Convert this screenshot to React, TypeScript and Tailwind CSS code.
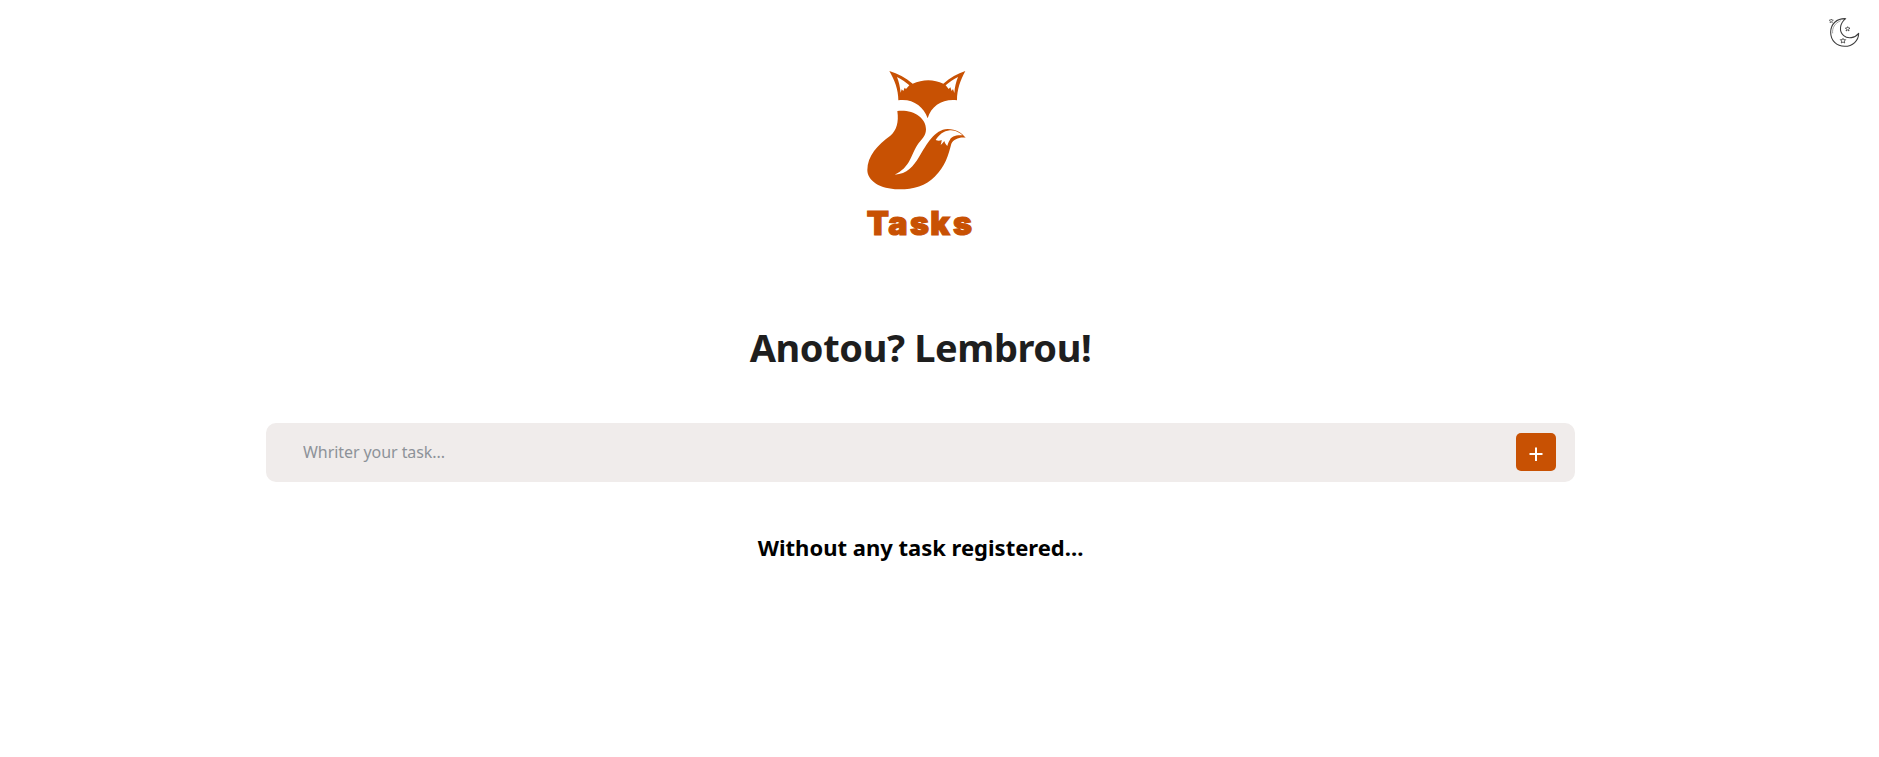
function FoxLogo() {
  return (
    <svg className="h-[185px] w-[141px]" viewBox="0 0 423 555" role="img" aria-label="Tasks">
      <g fill="#c85103">
        <path
          fillRule="evenodd"
          d="M118 33C143 40 167 54 188 71C218 57 252 57 280 71C300 54 323 40 346 33C331 61 321 88 321 121C279 116 244 137 233 175C220 138 187 115 145 121C145 88 134 61 118 33ZM141 51C147 66 150 81 152 98L155 88L160 93L164 83L168 87L178 76C167 66 154 57 141 51ZM324 51C311 57 298 66 287 76L296 87L301 82L305 93L309 87L313 99C314 81 318 66 324 51Z"
        />
        <path d="M142 153C189 148 228 172 228 208C228 229 213 240 202 255C182 286 181 322 134 344C172 342 190 319 207 291C230 254 253 208 293 207C318 207 335 219 347 233C329 230 311 237 304 251C295 286 286 318 254 350C228 378 185 389 145 388C91 387 52 363 52 330C52 288 83 254 121 227C139 212 147 188 142 153Z" />
      </g>
      <path
        fill="#fff"
        d="M257 240C268 224 280 213 300 211C316 210 330 219 338 226C317 224 303 231 300 239C295 247 293 252 292 258C287 252 284 249 283 243C279 248 276 252 272 255C274 249 275 244 275 240C270 242 265 243 257 240Z"
      />
      <text
        x="50 115 180 241 309"
        y="525"
        className="fill-[#c85103] stroke-[#c85103] font-['Inter',sans-serif] text-[97px] font-black"
        strokeWidth="3.5"
      >
        Tasks
      </text>
    </svg>
  );
}

function MoonIcon() {
  return (
    <svg className="h-[50px] w-16" viewBox="0 0 192 150" fill="none" stroke="#3c3c3c" strokeLinejoin="round">
      <path strokeWidth="3.2" d="M92 41C65 40 47 57 47 82C47 107 65 124 89 124C113 124 131 107 131 85C120 99 99 103 86 92C71 79 74 55 92 41Z" />
      <path strokeWidth="2" stroke="#777" d="M77 47C59 55 51 69 53 85" />
      <path strokeWidth="2.4" d="M98 65l2 4 5 0-4 4 1 5-4-3-5 3 2-5-4-4 5 0zM84 100l2 4 6 0-4 4 1 6-5-3-5 3 1-6-4-4 6 0z" />
      <path strokeWidth="2.4" stroke="#555" d="M49 42l1 3 5 0-4 4 1 4-3-2-4 2 1-4-3-4 4 0z" />
    </svg>
  );
}

export default function App() {
  return (
    <main className="relative flex h-[757px] w-full flex-col items-center bg-white pt-[60px] pr-[38px] font-['Noto_Sans',sans-serif]">
      <button aria-label="Toggle theme" className="absolute top-[5px] right-0">
        <MoonIcon />
      </button>
      <FoxLogo />
      <h1 className="mt-[72px] flex h-[60px] items-center text-[38px] font-bold tracking-[-0.4px] whitespace-nowrap text-[#1e1e1e]">
        Anotou? Lembrou!
      </h1>
      <form className="mt-[46px] flex h-[59px] w-[1309px] items-center rounded-[10px] bg-[#f0eceb] pr-[19px] pl-[37px]">
        <input
          className="mb-0.5 min-w-0 flex-1 bg-transparent text-[16px] tracking-[-0.07px] outline-none placeholder:text-[#8d9299]"
          placeholder="Whriter your task..."
        />
        <button
          type="button"
          aria-label="Add task"
          className="mb-px flex h-[38px] w-10 items-center justify-center rounded-[5px] bg-[#c85103] text-white"
        >
          <svg className="mt-1 h-[14px] w-[14px]" viewBox="0 0 14 14" stroke="currentColor" strokeWidth="2">
            <path d="M7 0.5V14M0.5 7H13.5" />
          </svg>
        </button>
      </form>
      <p className="mt-[49px] flex h-8 items-center text-[22px] font-bold whitespace-nowrap text-black">
        Without any task registered...
      </p>
    </main>
  );
}
